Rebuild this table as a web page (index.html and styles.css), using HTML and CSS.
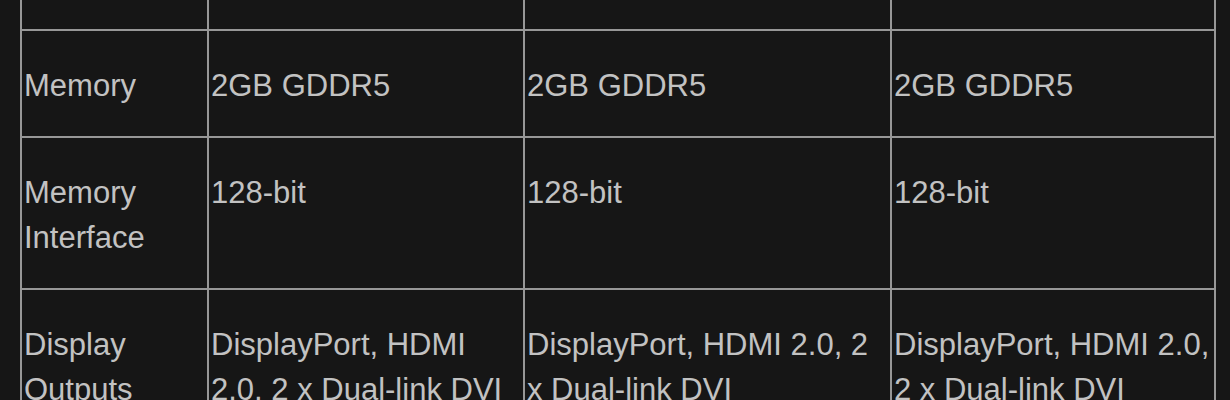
FILE: index.html
```html
<!DOCTYPE html>
<html lang="en">
<head>
    <meta charset="UTF-8">
    <meta name="viewport" content="width=device-width, initial-scale=1.0">
    <title>Graphics Card Specs</title>
    <link rel="stylesheet" href="styles.css">
</head>

<body>

<table class="specs">
  <colgroup>
    <col class="col-label">
    <col class="col-a">
    <col class="col-b">
    <col class="col-c">
  </colgroup>
  <tbody>
    <tr class="row-top">
      <td></td>
      <td></td>
      <td></td>
      <td class="last"></td>
    </tr>
    <tr>
      <td>Memory</td>
      <td>2GB GDDR5</td>
      <td>2GB GDDR5</td>
      <td class="last">2GB GDDR5</td>
    </tr>
    <tr>
      <td>Memory Interface</td>
      <td>128-bit</td>
      <td>128-bit</td>
      <td class="last">128-bit</td>
    </tr>
    <tr>
      <td>Display Outputs</td>
      <td>DisplayPort, HDMI 2.0, 2 x Dual-link DVI</td>
      <td>DisplayPort, HDMI 2.0, 2 x Dual-link DVI</td>
      <td class="last">DisplayPort, HDMI 2.0, 2 x Dual-link DVI</td>
    </tr>
  </tbody>
</table>

</body>
</html>
```

FILE: styles.css
```css
body {
    font-family: "Liberation Sans", Arial, sans-serif;
    background-color: #161616;
    color: #c2c2c2;
    margin: 0;
    padding: 0;
}

.specs {
    margin-left: 20px;
    width: 1196px;
    table-layout: fixed;
    border-collapse: separate;
    border-spacing: 0;
    font-size: 31px;
    line-height: 45px;
}

.col-label {
    width: 187px;
}

.col-a {
    width: 316px;
}

.col-b {
    width: 367px;
}

.col-c {
    width: 326px;
}

.specs td {
    box-sizing: border-box;
    vertical-align: top;
    text-align: left;
    border-left: 2px solid #979797;
    border-top: 2px solid #979797;
    padding: 32px 0 28px 2px;
}

.specs td.last {
    border-right: 2px solid #979797;
}

.row-top td {
    border-top: none;
    height: 29px;
    padding: 0;
}
```
